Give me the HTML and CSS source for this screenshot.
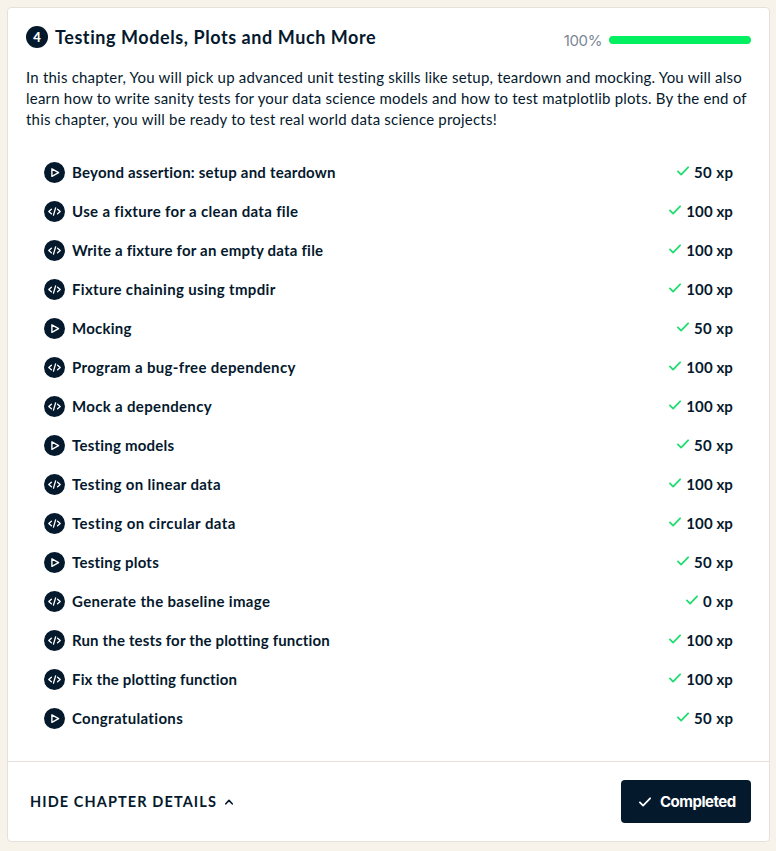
FILE: index.html
```
<!DOCTYPE html>
<html lang="en">
<head>
<meta charset="utf-8">
<title>Testing Models, Plots and Much More</title>
<link rel="stylesheet" href="styles.css">
</head>
<body>
<svg class="defs" aria-hidden="true">
  <symbol id="video" viewBox="0 0 21 21"><circle cx="10.5" cy="10.5" r="10.5" fill="#05192d"/><path d="M7.9 6.8v7.6l6.7-3.8z" fill="none" stroke="#fff" stroke-width="1.4" stroke-linejoin="round"/></symbol>
  <symbol id="code" viewBox="0 0 21 21"><circle cx="10.5" cy="10.5" r="10.5" fill="#05192d"/><path d="M7.4 8.2 4.8 10.5l2.6 2.3M13.6 8.2l2.6 2.3-2.6 2.3M11.6 6.9 9.5 14.1" fill="none" stroke="#fff" stroke-width="1.35" stroke-linecap="round" stroke-linejoin="round"/></symbol>
  <symbol id="check" viewBox="0 0 12 10"><path d="M.9 5.4 4.1 8.6 11.1 1.3" fill="none" stroke="currentColor" stroke-width="1.75" stroke-linecap="round" stroke-linejoin="round"/></symbol>
</svg>
<main class="card">
  <section class="chapter">
    <header class="head">
      <span class="number">4</span>
      <h1>Testing Models, Plots and Much More</h1>
      <span class="percent">100%</span>
      <span class="bar"></span>
    </header>
    <p class="intro"><span>In this chapter, You will pick up advanced unit testing skills like setup, teardown and mocking. You will also</span> <span>learn how to write sanity tests for your data science models and how to test matplotlib plots. By the end of</span> <span>this chapter, you will be ready to test real world data science projects!</span></p>
    <ul class="lessons">
      <li><svg class="kind"><use href="#video"/></svg><span class="name">Beyond assertion: setup and teardown</span><svg class="check"><use href="#check"/></svg><span class="xp">50 xp</span></li>
      <li><svg class="kind"><use href="#code"/></svg><span class="name wide">Use a fixture for a clean data file</span><svg class="check"><use href="#check"/></svg><span class="xp hundred">100 xp</span></li>
      <li><svg class="kind"><use href="#code"/></svg><span class="name">Write a fixture for an empty data file</span><svg class="check"><use href="#check"/></svg><span class="xp hundred">100 xp</span></li>
      <li><svg class="kind"><use href="#code"/></svg><span class="name wide">Fixture chaining using tmpdir</span><svg class="check"><use href="#check"/></svg><span class="xp hundred">100 xp</span></li>
      <li><svg class="kind"><use href="#video"/></svg><span class="name">Mocking</span><svg class="check"><use href="#check"/></svg><span class="xp">50 xp</span></li>
      <li><svg class="kind"><use href="#code"/></svg><span class="name wide">Program a bug-free dependency</span><svg class="check"><use href="#check"/></svg><span class="xp hundred">100 xp</span></li>
      <li><svg class="kind"><use href="#code"/></svg><span class="name wide">Mock a dependency</span><svg class="check"><use href="#check"/></svg><span class="xp hundred">100 xp</span></li>
      <li><svg class="kind"><use href="#video"/></svg><span class="name">Testing models</span><svg class="check"><use href="#check"/></svg><span class="xp">50 xp</span></li>
      <li><svg class="kind"><use href="#code"/></svg><span class="name wide">Testing on linear data</span><svg class="check"><use href="#check"/></svg><span class="xp hundred">100 xp</span></li>
      <li><svg class="kind"><use href="#code"/></svg><span class="name wider">Testing on circular data</span><svg class="check"><use href="#check"/></svg><span class="xp hundred">100 xp</span></li>
      <li><svg class="kind"><use href="#video"/></svg><span class="name">Testing plots</span><svg class="check"><use href="#check"/></svg><span class="xp">50 xp</span></li>
      <li><svg class="kind"><use href="#code"/></svg><span class="name wide">Generate the baseline image</span><svg class="check"><use href="#check"/></svg><span class="xp">0 xp</span></li>
      <li><svg class="kind"><use href="#code"/></svg><span class="name tight">Run the tests for the plotting function</span><svg class="check"><use href="#check"/></svg><span class="xp hundred">100 xp</span></li>
      <li><svg class="kind"><use href="#code"/></svg><span class="name tight">Fix the plotting function</span><svg class="check"><use href="#check"/></svg><span class="xp hundred">100 xp</span></li>
      <li><svg class="kind"><use href="#video"/></svg><span class="name wide">Congratulations</span><svg class="check"><use href="#check"/></svg><span class="xp">50 xp</span></li>
    </ul>
  </section>
  <footer class="foot">
    <a class="toggle"><span>HIDE CHAPTER DETAILS</span><svg class="caret" viewBox="0 0 8 6"><path d="M.8 4.8 4 1.4l3.2 3.4" fill="none" stroke="currentColor" stroke-width="1.6" stroke-linecap="round" stroke-linejoin="round"/></svg></a>
    <button class="done"><svg class="check"><use href="#check"/></svg><span>Completed</span></button>
  </footer>
</main>
</body>
</html>
```
FILE: styles.css
```
* { box-sizing: border-box; }
body {
  margin: 0;
  padding: 7px 6px 9px 7px;
  height: 851px;
  background: #f7f3eb;
  color: #05192d;
  font-family: Lato, "Open Sans", sans-serif;
}
.defs { position: absolute; width: 0; height: 0; }
.card {
  display: flex;
  flex-direction: column;
  height: 835px;
  background: #fff;
  border: 1px solid #e5e1da;
  border-radius: 4px;
}
.chapter { flex: 1; padding: 18px; }
.head { display: flex; align-items: center; height: 22px; }
.number {
  width: 22px;
  height: 22px;
  border-radius: 50%;
  background: #05192d;
  color: #fff;
  font: 900 13px/22px Lato, sans-serif;
  text-align: center;
}
h1 {
  flex: 1;
  margin: 0 0 0 7px;
  font-size: 18px;
  line-height: 22px;
  font-weight: 700;
  letter-spacing: 0.57px;
  white-space: nowrap;
}
.percent {
  margin: 8px 7px 0 0;
  font: 400 15px/20px Inter, sans-serif;
  letter-spacing: -0.4px;
  color: #7b8794;
}
.bar { width: 142px; height: 8px; margin-top: 6px; border-radius: 4px; background: #03ef62; }
.intro { margin: 19px 0 0; font-size: 15px; line-height: 21px; letter-spacing: 0.21px; }
.intro span { display: block; white-space: nowrap; }
.lessons { list-style: none; margin: 23px 18px 0; padding: 0; }
.lessons li {
  display: flex;
  align-items: center;
  height: 39px;
  font-size: 15px;
  line-height: 18px;
  font-weight: 700;
}
.kind { width: 21px; height: 21px; margin-right: 7px; }
.name { flex: 1; padding-bottom: 2px; letter-spacing: 0.22px; white-space: nowrap; }
.name.wide { letter-spacing: 0.33px; }
.name.wider { letter-spacing: 0.43px; }
.name.tight { letter-spacing: 0.16px; }
.check { width: 12px; height: 10px; flex: none; }
.lessons .check { margin: 0 5px 3px 0; color: #1fdc70; }
.xp { padding-bottom: 2px; letter-spacing: 0.4px; margin-right: -0.4px; white-space: nowrap; }
.xp.hundred { letter-spacing: 0.1px; margin-right: 0; }
.foot {
  display: flex;
  align-items: center;
  justify-content: space-between;
  height: 80px;
  padding: 0 18px 0 22px;
  border-top: 1px solid #e5e1da;
}
.toggle { display: flex; align-items: center; gap: 8px; font-size: 14.5px; font-weight: 700; letter-spacing: 1.1px; }
.caret { width: 8px; height: 6px; }
.done {
  display: flex;
  align-items: center;
  width: 130px;
  height: 43px;
  padding: 0 0 0 18px;
  gap: 9px;
  border: 0;
  border-radius: 4px;
  background: #05192d;
  color: #fff;
  font: 700 15px/20px Inter, sans-serif;
  letter-spacing: -0.5px;
}
```
